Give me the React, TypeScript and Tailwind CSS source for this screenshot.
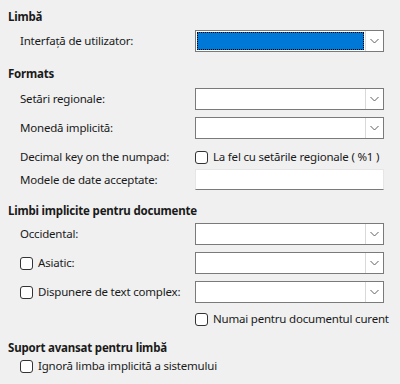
import React from "react";

function Chevron() {
  return (
    <svg width="9" height="6" viewBox="0 0 9 6" fill="none">
      <path d="M0.5 1 L4.5 5 L8.5 1" stroke="#606060" strokeWidth="1" />
    </svg>
  );
}

function Combo({ focused = false }: { focused?: boolean }) {
  return (
    <div className="flex h-[22px] w-[189px] border border-[#7a7a7a] bg-white">
      <div className="flex-1 p-[1px]">
        {focused && (
          <div className="h-full w-full border border-dotted border-black bg-[#0078d7]" />
        )}
      </div>
      <div className="flex w-[18px] items-center justify-center border-l border-[#d9d9d9] bg-white">
        <Chevron />
      </div>
    </div>
  );
}

function Check({ label }: { label: string }) {
  return (
    <label className="flex items-center gap-[5px] whitespace-nowrap">
      <span className="h-[13px] w-[13px] shrink-0 rounded-[3px] border border-[#333] bg-white" />
      <span>{label}</span>
    </label>
  );
}

function Row({ label, children, mt }: { label: React.ReactNode; children: React.ReactNode; mt: string }) {
  return (
    <div className={`flex h-[22px] items-center ${mt}`}>
      <div className="w-[187px] shrink-0 whitespace-nowrap pl-[12px]">{label}</div>
      {children}
    </div>
  );
}

export default function App() {
  return (
    <div
      className="h-[384px] w-[400px] bg-[#f0f0f0] pl-[8px] pt-[9px] text-[11.5px] tracking-[-0.2px] text-[#1a1a1a]"
      style={{ fontFamily: '"Noto Sans", "Segoe UI", sans-serif' }}
    >
      <div className="flex h-[16px] items-center font-bold">Limbă</div>
      <Row label="Interfață de utilizator:" mt="mt-[5px]">
        <Combo focused />
      </Row>

      <div className="mt-[14px] flex h-[16px] items-center font-bold">Formats</div>
      <Row label="Setări regionale:" mt="mt-[6px]">
        <Combo />
      </Row>
      <Row label="Monedă implicită:" mt="mt-[7px]">
        <Combo />
      </Row>
      <Row label="Decimal key on the numpad:" mt="mt-[7px]">
        <Check label="La fel cu setările regionale ( %1 )" />
      </Row>
      <div className="mt-[1px] flex h-[21px] items-center">
        <div className="w-[187px] shrink-0 pl-[12px]">Modele de date acceptate:</div>
        <div className="h-[21px] w-[189px] border border-[#e6e6e6] border-b-[#7a7a7a] bg-white" />
      </div>

      <div className="mt-[13px] flex h-[16px] items-center font-bold">Limbi implicite pentru documente</div>
      <Row label="Occidental:" mt="mt-[4px]">
        <Combo />
      </Row>
      <Row label={<Check label="Asiatic:" />} mt="mt-[7px]">
        <Combo />
      </Row>
      <Row label={<Check label="Dispunere de text complex:" />} mt="mt-[7px]">
        <Combo />
      </Row>
      <div className="mt-[6px] flex h-[20px] items-center pl-[187px]">
        <Check label="Numai pentru documentul curent" />
      </div>

      <div className="mt-[11px] flex h-[16px] items-center font-bold">Suport avansat pentru limbă</div>
      <div className="mt-[1px] flex h-[18px] items-center pl-[12px]">
        <Check label="Ignoră limba implicită a sistemului" />
      </div>
    </div>
  );
}
